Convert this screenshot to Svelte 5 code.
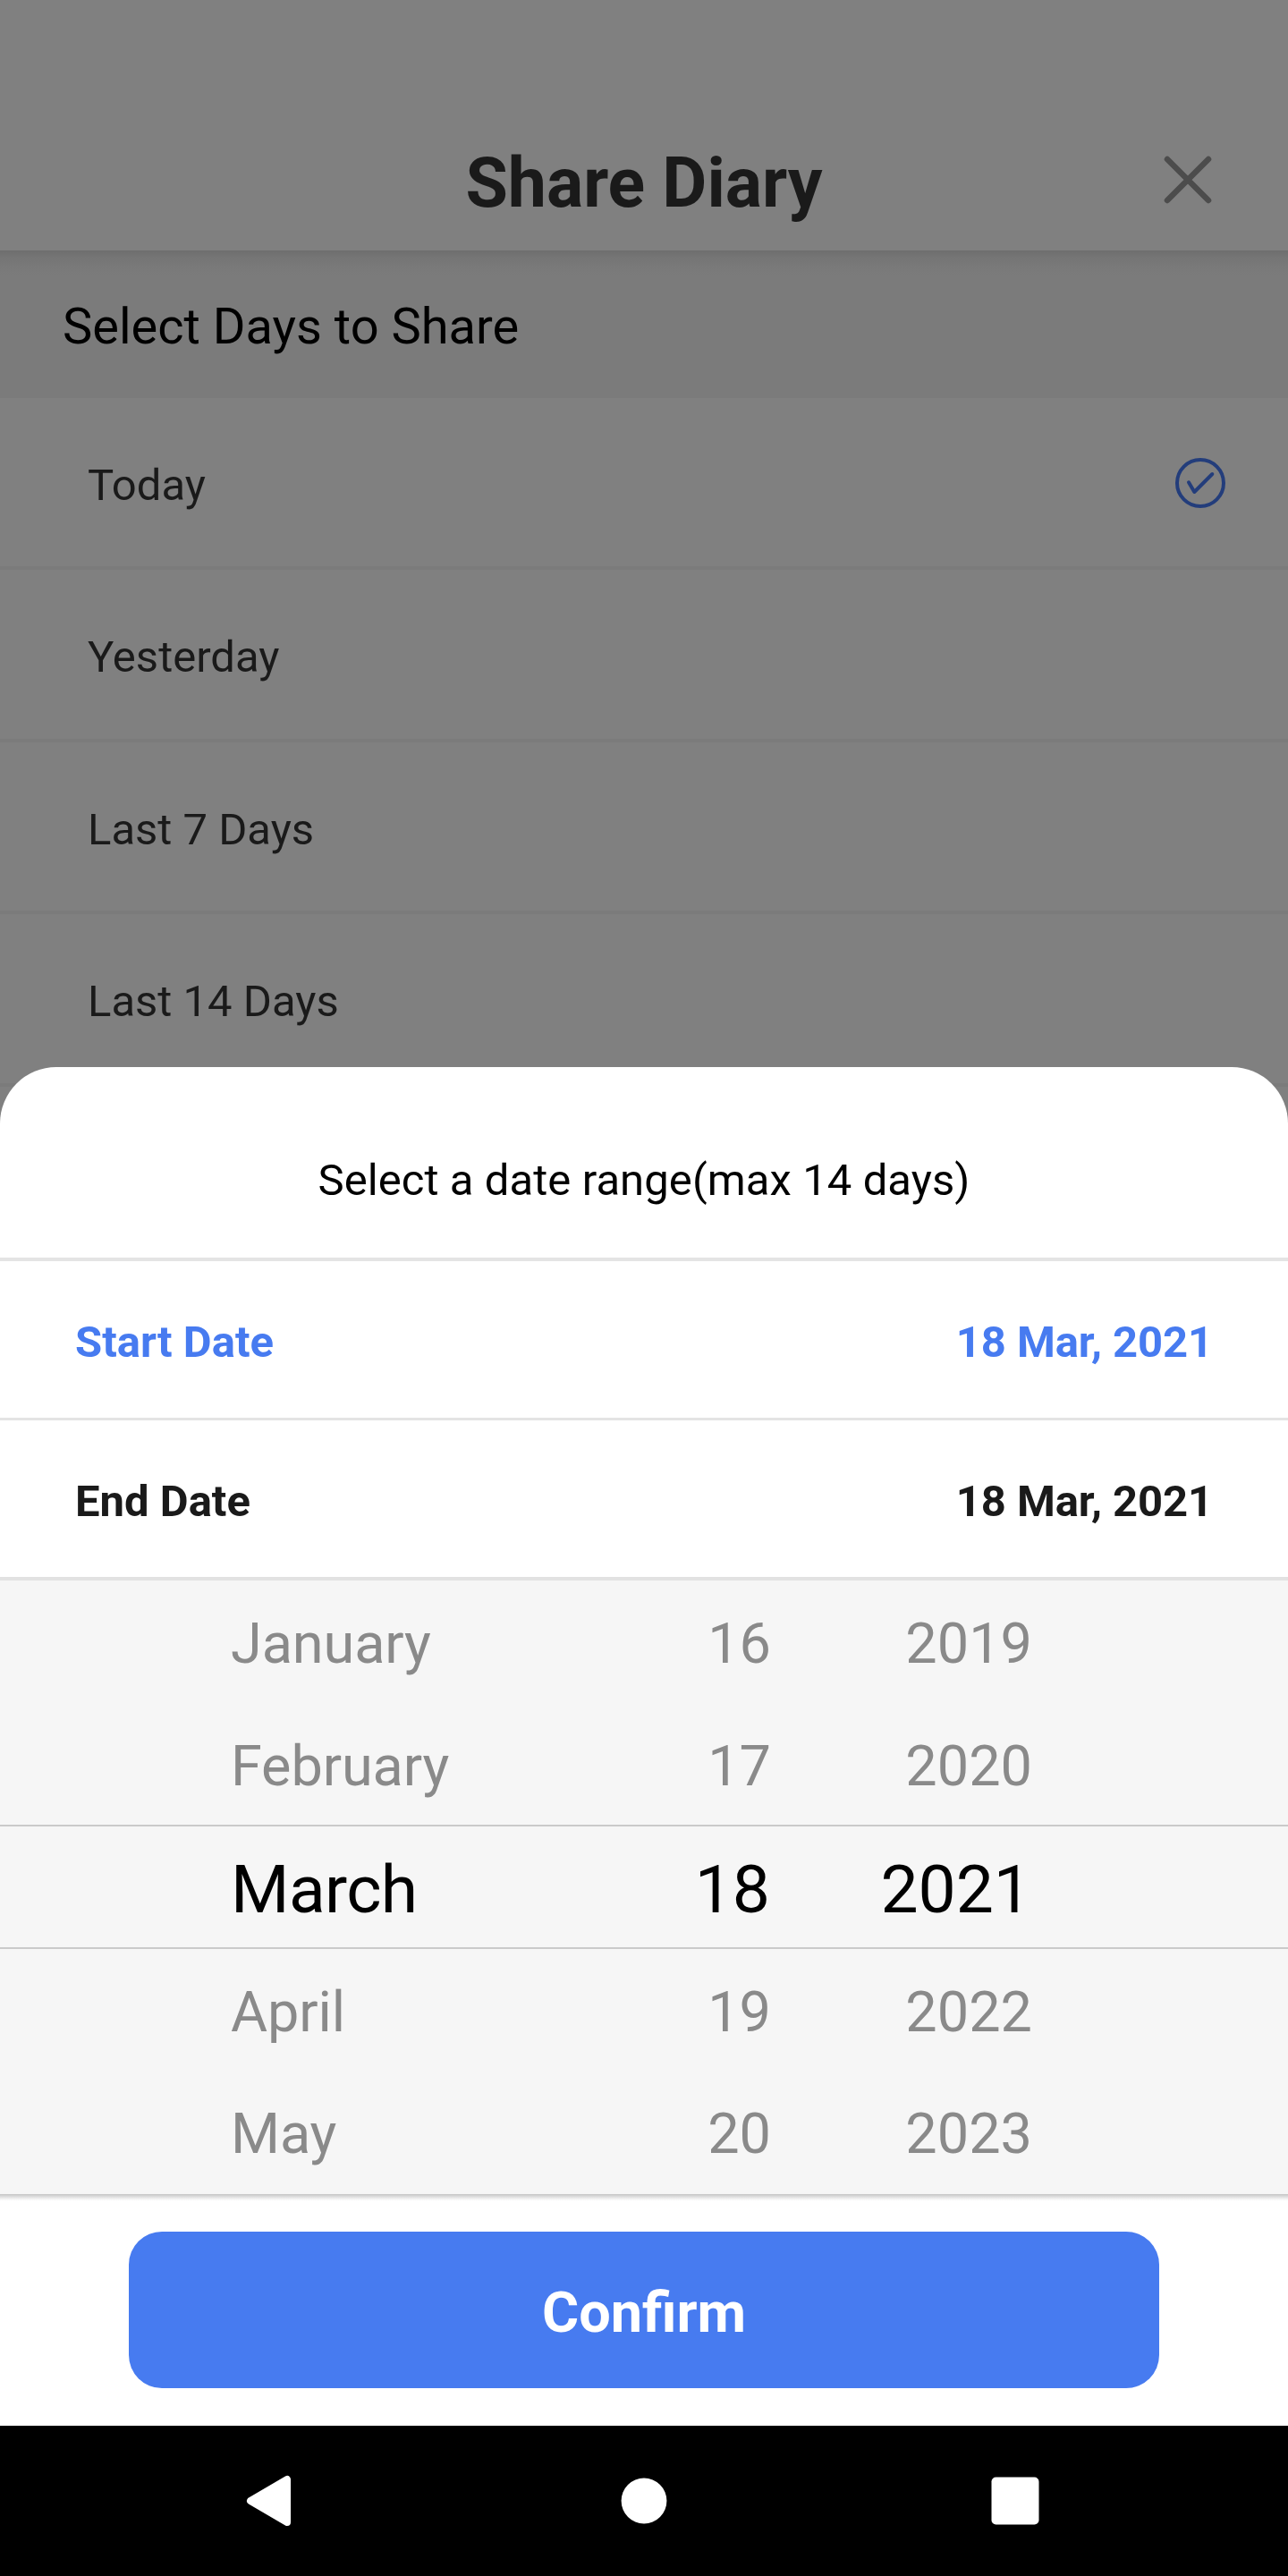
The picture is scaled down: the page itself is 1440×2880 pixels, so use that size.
<script>
  const ranges = ['Today', 'Yesterday', 'Last 7 Days', 'Last 14 Days', ''];
  const months = ['January', 'February', 'March', 'April', 'May'];
  const days = [16, 17, 18, 19, 20];
  const years = [2019, 2020, 2021, 2022, 2023];
</script>

<div class="screen">
  <header>
    <span></span>
    <h1>Share Diary</h1>
    <svg class="close" viewBox="0 0 60 60"><path d="M7 7 53 53M53 7 7 53" /></svg>
  </header>
  <h2>Select Days to Share</h2>
  <div class="ranges">
    {#each ranges as range, i}
      <div class="range">
        <span>{range}</span>
        {#if i === 0}
          <svg class="check" viewBox="0 0 56 56"><circle cx="28" cy="28" r="26" /><path d="M15 27.3 21.3 38 41.3 18" /></svg>
        {/if}
      </div>
    {/each}
  </div>
  <section class="sheet">
    <div class="title">Select a date range(max 14 days)</div>
    <div class="date active"><span>Start Date</span><span class="value">18 Mar, 2021</span></div>
    <div class="date end"><span>End Date</span><span class="value">18 Mar, 2021</span></div>
    <div class="picker">
      {#each months as month, i}
        <div class="row" class:selected={i === 2}>
          <span class="month">{month}</span><span class="day">{days[i]}</span><span class="year">{years[i]}</span>
        </div>
      {/each}
    </div>
    <div class="action"><button>Confirm</button></div>
  </section>
  <nav>
    <svg viewBox="0 0 60 60"><path class="back" d="M10 30 51 6V54Z" /></svg>
    <svg viewBox="0 0 60 60"><circle cx="30" cy="30" r="25.4" /></svg>
    <svg viewBox="0 0 60 60"><rect x="3.5" y="3.5" width="53" height="53" rx="5" /></svg>
  </nav>
</div>

<style>
  :global(body) { margin: 0; background: #808080; }
  .screen { width: 1440px; height: 2880px; overflow: hidden; display: flex; flex-direction: column; font-family: Roboto, sans-serif; background: #808080; color: #000; }
  .screen, .screen * { box-sizing: border-box; }
  header { height: 280px; flex: none; padding: 122px 82px 0 82px; display: grid; grid-template-columns: 60px 1fr 60px; align-items: start; }
  h1 { margin: 0; line-height: 167px; height: 158px; font-size: 77px; font-weight: 700; text-align: center; color: #1a1a1a; }
  .close { width: 60px; height: 60px; margin-top: 49px; fill: none; stroke: #4c4c4c; stroke-width: 6.5; stroke-linecap: round; }
  h2 { margin: 0; height: 164.5px; flex: none; padding-left: 70px; font-size: 56px; font-weight: 400; line-height: 170px; background: linear-gradient(#6e6e6e, #757575 8px, #797979 18px, #7b7b7b 28px); }
  .ranges { height: 770px; flex: none; overflow: hidden; }
  .range { height: 192.5px; padding: 0 70px 0 98px; display: flex; align-items: center; justify-content: space-between; border-bottom: 4px solid #7b7b7b; font-size: 49px; color: #1a1a1a; }
  .range span { padding-top: 7px; }
  .check { width: 56px; height: 56px; margin-top: 2px; fill: none; stroke: #233d7b; stroke-width: 4; stroke-linecap: round; stroke-linejoin: round; }
  .sheet { height: 1519px; flex: none; margin-top: -21.5px; z-index: 1; background: #fff; border-radius: 63px 63px 0 0; overflow: hidden; }
  .title { height: 217px; padding-top: 39px; display: flex; align-items: center; justify-content: center; border-bottom: 4px solid #e4e4e4; font-size: 49px; letter-spacing: 0.08px; }
  .date { height: 178px; padding: 6px 84px 0; display: flex; align-items: center; justify-content: space-between; border-bottom: 3px solid #e4e4e4; font-size: 49px; font-weight: 700; color: #1a1a1a; }
  .value { letter-spacing: -0.1px; }
  .active { color: #477bf0; }
  .end { height: 179px; border-bottom: 4px solid #e2e2e2; }
  .picker { height: 686px; background: #f6f6f6; }
  .row { height: 137px; padding-top: 4px; display: grid; grid-template-columns: 600px 262px 292px; align-items: center; font-size: 63px; color: #8a8a8a; }
  .row:last-child { padding-top: 2px; }
  .month { padding-left: 258px; letter-spacing: -0.1px; }
  .day, .year { text-align: right; }
  .selected { height: 139px; margin-top: -1px; padding-top: 4px; font-size: 75px; color: #000; border-top: 2px solid #cacaca; border-bottom: 2px solid #cacaca; }
  .selected .month { letter-spacing: -0.6px; }
  .selected .day, .selected .year { padding-right: 1px; }
  .action { height: 259px; padding: 42px 144px 0; background: linear-gradient(#c6c6c6, #dedede 3px, #f8f8f8 6px, #fff 8px); }
  button { display: block; width: 100%; height: 175px; padding: 6px 0 0; border: 0; border-radius: 37px; background: #477bf0; color: #fff; font: 700 63px Roboto, sans-serif; }
  nav { height: 168px; flex: none; padding-left: 270px; display: grid; grid-template-columns: 420px 415px 60px; align-items: center; background: #000; }
  nav svg { width: 60px; height: 60px; fill: #fff; }
  .back { stroke: #fff; stroke-width: 8; stroke-linejoin: round; }
</style>
